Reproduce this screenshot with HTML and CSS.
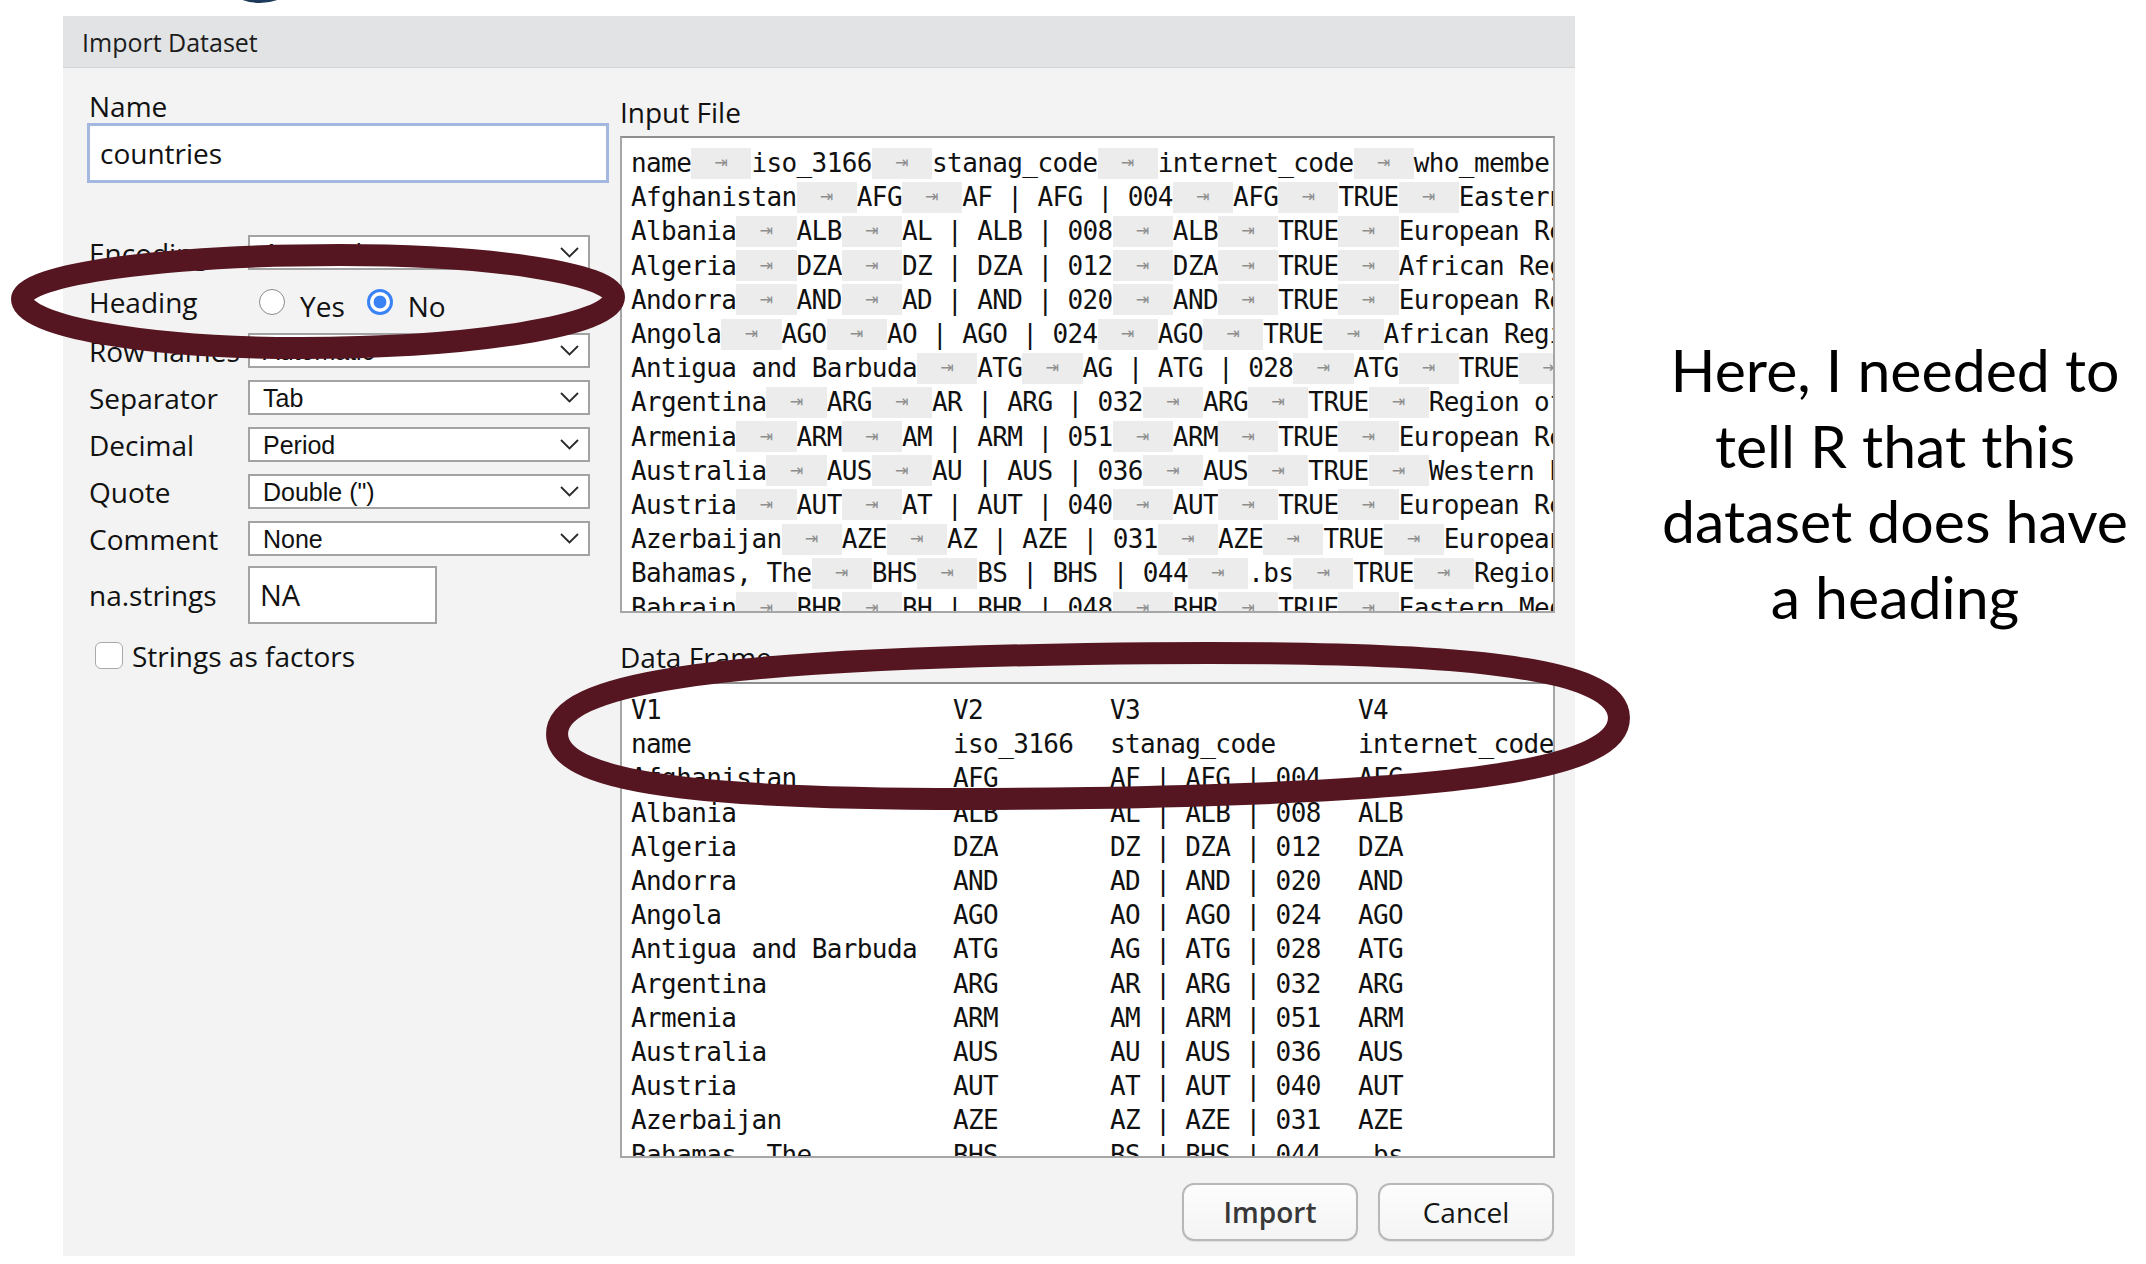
FILE: index.html
```html
<!DOCTYPE html>
<html>
<head>
<meta charset="utf-8">
<link rel="stylesheet" href="styles.css">
</head>
<body>
<div class="logo"></div>
<div class="page">
  <div class="dialog">
    <div class="titlebar">Import Dataset</div>
    <div class="dbody">
      <div class="left">
        <div class="name-label">Name</div>
        <div class="name-input">countries</div>
        <div class="form">
          <div class="row"><div class="label">Encoding</div><div class="select"><span>Automatic</span><svg class="chev" width="19" height="11" viewBox="0 0 19 11"><polyline points="1,1 9.5,9.5 18,1"/></svg></div></div>
          <div class="row heading-row"><div class="label">Heading</div>
            <div class="radios">
              <span class="radio"></span><span class="rtext">Yes</span>
              <span class="radio on"></span><span class="rtext">No</span>
            </div>
          </div>
          <div class="row"><div class="label">Row names</div><div class="select"><span>Automatic</span><svg class="chev" width="19" height="11" viewBox="0 0 19 11"><polyline points="1,1 9.5,9.5 18,1"/></svg></div></div>
          <div class="row gap"><div class="label">Separator</div><div class="select"><span>Tab</span><svg class="chev" width="19" height="11" viewBox="0 0 19 11"><polyline points="1,1 9.5,9.5 18,1"/></svg></div></div>
          <div class="row gap"><div class="label">Decimal</div><div class="select"><span>Period</span><svg class="chev" width="19" height="11" viewBox="0 0 19 11"><polyline points="1,1 9.5,9.5 18,1"/></svg></div></div>
          <div class="row gap"><div class="label">Quote</div><div class="select"><span>Double (")</span><svg class="chev" width="19" height="11" viewBox="0 0 19 11"><polyline points="1,1 9.5,9.5 18,1"/></svg></div></div>
          <div class="row gap"><div class="label">Comment</div><div class="select"><span>None</span><svg class="chev" width="19" height="11" viewBox="0 0 19 11"><polyline points="1,1 9.5,9.5 18,1"/></svg></div></div>
          <div class="row na-row"><div class="label">na.strings</div><div class="na-input">NA</div></div>
          <div class="check-row"><span class="checkbox"></span><span class="ctext">Strings as factors</span></div>
        </div>
      </div>
      <div class="right">
        <div class="section-label">Input File</div>
        <div class="filebox">
          <div class="mrow"><span>name</span><span class="tab">⇥</span><span>iso_3166</span><span class="tab">⇥</span><span>stanag_code</span><span class="tab">⇥</span><span>internet_code</span><span class="tab">⇥</span><span>who_member</span><span class="tab">⇥</span><span>who_region</span></div>
          <div class="mrow"><span>Afghanistan</span><span class="tab">⇥</span><span>AFG</span><span class="tab">⇥</span><span>AF | AFG | 004</span><span class="tab">⇥</span><span>AFG</span><span class="tab">⇥</span><span>TRUE</span><span class="tab">⇥</span><span>Eastern Mediterranean Region</span></div>
          <div class="mrow"><span>Albania</span><span class="tab">⇥</span><span>ALB</span><span class="tab">⇥</span><span>AL | ALB | 008</span><span class="tab">⇥</span><span>ALB</span><span class="tab">⇥</span><span>TRUE</span><span class="tab">⇥</span><span>European Region</span></div>
          <div class="mrow"><span>Algeria</span><span class="tab">⇥</span><span>DZA</span><span class="tab">⇥</span><span>DZ | DZA | 012</span><span class="tab">⇥</span><span>DZA</span><span class="tab">⇥</span><span>TRUE</span><span class="tab">⇥</span><span>African Region</span></div>
          <div class="mrow"><span>Andorra</span><span class="tab">⇥</span><span>AND</span><span class="tab">⇥</span><span>AD | AND | 020</span><span class="tab">⇥</span><span>AND</span><span class="tab">⇥</span><span>TRUE</span><span class="tab">⇥</span><span>European Region</span></div>
          <div class="mrow"><span>Angola</span><span class="tab">⇥</span><span>AGO</span><span class="tab">⇥</span><span>AO | AGO | 024</span><span class="tab">⇥</span><span>AGO</span><span class="tab">⇥</span><span>TRUE</span><span class="tab">⇥</span><span>African Region</span></div>
          <div class="mrow"><span>Antigua and Barbuda</span><span class="tab">⇥</span><span>ATG</span><span class="tab">⇥</span><span>AG | ATG | 028</span><span class="tab">⇥</span><span>ATG</span><span class="tab">⇥</span><span>TRUE</span><span class="tab">⇥</span><span>Region of the Americas</span></div>
          <div class="mrow"><span>Argentina</span><span class="tab">⇥</span><span>ARG</span><span class="tab">⇥</span><span>AR | ARG | 032</span><span class="tab">⇥</span><span>ARG</span><span class="tab">⇥</span><span>TRUE</span><span class="tab">⇥</span><span>Region of the Americas</span></div>
          <div class="mrow"><span>Armenia</span><span class="tab">⇥</span><span>ARM</span><span class="tab">⇥</span><span>AM | ARM | 051</span><span class="tab">⇥</span><span>ARM</span><span class="tab">⇥</span><span>TRUE</span><span class="tab">⇥</span><span>European Region</span></div>
          <div class="mrow"><span>Australia</span><span class="tab">⇥</span><span>AUS</span><span class="tab">⇥</span><span>AU | AUS | 036</span><span class="tab">⇥</span><span>AUS</span><span class="tab">⇥</span><span>TRUE</span><span class="tab">⇥</span><span>Western Pacific Region</span></div>
          <div class="mrow"><span>Austria</span><span class="tab">⇥</span><span>AUT</span><span class="tab">⇥</span><span>AT | AUT | 040</span><span class="tab">⇥</span><span>AUT</span><span class="tab">⇥</span><span>TRUE</span><span class="tab">⇥</span><span>European Region</span></div>
          <div class="mrow"><span>Azerbaijan</span><span class="tab">⇥</span><span>AZE</span><span class="tab">⇥</span><span>AZ | AZE | 031</span><span class="tab">⇥</span><span>AZE</span><span class="tab">⇥</span><span>TRUE</span><span class="tab">⇥</span><span>European Region</span></div>
          <div class="mrow"><span>Bahamas, The</span><span class="tab">⇥</span><span>BHS</span><span class="tab">⇥</span><span>BS | BHS | 044</span><span class="tab">⇥</span><span>.bs</span><span class="tab">⇥</span><span>TRUE</span><span class="tab">⇥</span><span>Region of the Americas</span></div>
          <div class="mrow"><span>Bahrain</span><span class="tab">⇥</span><span>BHR</span><span class="tab">⇥</span><span>BH | BHR | 048</span><span class="tab">⇥</span><span>BHR</span><span class="tab">⇥</span><span>TRUE</span><span class="tab">⇥</span><span>Eastern Mediterranean Region</span></div>
        </div>
        <div class="section-label df-label">Data Frame</div>
        <div class="dfbox">
          <div class="dfgrid">
            <span>V1</span><span>V2</span><span>V3</span><span>V4</span>
            <span>name</span><span>iso_3166</span><span>stanag_code</span><span>internet_code</span>
            <span>Afghanistan</span><span>AFG</span><span>AF | AFG | 004</span><span>AFG</span>
            <span>Albania</span><span>ALB</span><span>AL | ALB | 008</span><span>ALB</span>
            <span>Algeria</span><span>DZA</span><span>DZ | DZA | 012</span><span>DZA</span>
            <span>Andorra</span><span>AND</span><span>AD | AND | 020</span><span>AND</span>
            <span>Angola</span><span>AGO</span><span>AO | AGO | 024</span><span>AGO</span>
            <span>Antigua and Barbuda</span><span>ATG</span><span>AG | ATG | 028</span><span>ATG</span>
            <span>Argentina</span><span>ARG</span><span>AR | ARG | 032</span><span>ARG</span>
            <span>Armenia</span><span>ARM</span><span>AM | ARM | 051</span><span>ARM</span>
            <span>Australia</span><span>AUS</span><span>AU | AUS | 036</span><span>AUS</span>
            <span>Austria</span><span>AUT</span><span>AT | AUT | 040</span><span>AUT</span>
            <span>Azerbaijan</span><span>AZE</span><span>AZ | AZE | 031</span><span>AZE</span>
            <span>Bahamas, The</span><span>BHS</span><span>BS | BHS | 044</span><span>.bs</span>
          </div>
        </div>
        <div class="buttons">
          <div class="btn primary">Import</div>
          <div class="btn">Cancel</div>
        </div>
      </div>
    </div>
  </div>
  <div class="note">Here, I needed to<br>tell R that this<br>dataset does have<br>a heading</div>
</div>
<svg class="marks" width="2146" height="1264" viewBox="0 0 2146 1264">
  <path d="M22 299 C22 274.7 164.4 255 340 255 C491.3 255 614 273.8 614 297 C614 325.2 473.4 348 300 348 C146.5 348 22 326.1 22 299 Z"/>
  <path transform="rotate(-0.9 1088 726)" d="M557 726 C557 675 711.5 654 1088 654 C1464.5 654 1619 675 1619 726 C1619 777 1464.5 798 1088 798 C711.5 798 557 777 557 726 Z"/>
</svg>
</body>
</html>
```

FILE: styles.css
```css
* { box-sizing: border-box; }
html, body { margin: 0; padding: 0; }
body {
  width: 2146px;
  height: 1264px;
  background: #ffffff;
  position: relative;
  overflow: hidden;
  font-family: "Open Sans", "DejaVu Sans", sans-serif;
  color: #111;
}
.logo {
  position: absolute;
  left: 208px;
  top: -101px;
  width: 104px;
  height: 104px;
  border-radius: 50%;
  background: #1d3a5a;
}
.page { display: flex; align-items: flex-start; }
.dialog {
  margin: 16px 0 0 63px;
  width: 1512px;
  height: 1240px;
  background: #f3f3f3;
  display: flex;
  flex-direction: column;
  flex: none;
}
.titlebar {
  height: 52px;
  flex: none;
  background: #e2e3e5;
  border-bottom: 1px solid #d3d4d6;
  padding-left: 19px;
  display: flex;
  align-items: center;
  font-size: 25px;
  line-height: 30px;
  color: #1c1c1c;
}
.dbody { display: flex; flex: 1; }
.left { width: 557px; flex: none; padding: 22px 0 0 24px; }
.name-label { font-size: 28px; line-height: 33px; height: 33px; padding-left: 2px; }
.name-input {
  width: 522px;
  height: 60px;
  border: 3px solid #a4b8df;
  background: #fff;
  padding-left: 10px;
  display: flex;
  align-items: center;
  font-size: 28px;
  line-height: 34px;
}
.form { margin-top: 52px; display: flex; flex-direction: column; }
.row { display: flex; align-items: center; height: 35px; }
.row.gap { margin-top: 12px; }
.label { width: 161px; flex: none; padding-left: 2px; font-size: 28px; line-height: 34px; white-space: nowrap; }
.select {
  width: 342px;
  height: 35px;
  border: 2px solid #a3a3a3;
  background: #fff;
  display: flex;
  align-items: center;
  justify-content: space-between;
  padding: 0 9px 0 13px;
  font-family: "Liberation Sans", Arial, sans-serif;
  font-size: 25px;
  line-height: 30px;
  color: #111;
}
.chev { fill: none; stroke: #2a2a2a; stroke-width: 1.8; }
.heading-row { height: 63px; }
.radios { display: flex; align-items: center; padding-left: 11px; }
.radio {
  width: 26px;
  height: 26px;
  border-radius: 50%;
  border: 1.5px solid #8c8c8c;
  background: #fff;
  flex: none;
}
.radio.on {
  border: 3.5px solid #3a83f6;
  background: radial-gradient(circle, #3a83f6 0 6px, #fff 6.8px);
  margin-left: 22px;
}
.rtext { font-size: 28px; line-height: 34px; margin: 8px 0 0 15px; }
.na-row { margin-top: 10px; height: 58px; }
.na-input {
  width: 189px;
  height: 58px;
  border: 2px solid #a3a3a3;
  background: #fff;
  padding-left: 10px;
  display: flex;
  align-items: center;
  font-size: 29px;
  line-height: 34px;
}
.check-row { margin-top: 18px; display: flex; align-items: center; height: 27px; padding-left: 8px; }
.checkbox {
  width: 28px;
  height: 27px;
  border: 1.5px solid #a9a9a9;
  border-radius: 6px;
  background: #fff;
  flex: none;
}
.ctext { margin-left: 9px; font-size: 28px; line-height: 34px; }
.right {
  width: 955px;
  flex: none;
  padding: 27px 20px 15px 0;
  display: flex;
  flex-direction: column;
}
.section-label { font-size: 28px; line-height: 34px; height: 34px; }
.df-label { margin-top: 27px; }
.filebox, .dfbox {
  background: #fff;
  border: 2px solid #a6a6a6;
  border-top-color: #8e8e8e;
  overflow: hidden;
  font-family: "DejaVu Sans Mono", monospace;
  font-size: 26px;
  letter-spacing: -0.6px;
  color: #111;
}
.filebox { margin-top: 7px; height: 477px; padding: 8px 0 0 9px; }
.dfbox { margin-top: 8px; height: 476px; padding: 9px 0 0 9px; }
.mrow { display: flex; align-items: center; height: 34.2px; white-space: pre; }
.mrow > span { flex: none; line-height: 34px; }
.mrow > .tab {
  width: 60.2px;
  height: 31px;
  background: #ececec;
  display: flex;
  align-items: center;
  justify-content: center;
  color: #8e8e8e;
  font-family: "DejaVu Sans", sans-serif;
  font-size: 16px;
  letter-spacing: 0;
}
.dfgrid {
  display: grid;
  grid-template-columns: 322px 157px 248px max-content;
  grid-auto-rows: 34.2px;
  align-items: center;
  white-space: pre;
}
.dfgrid > span { line-height: 34px; }
.buttons { margin-top: 25px; display: flex; justify-content: flex-end; gap: 20px; padding-right: 1px; }
.btn {
  width: 176px;
  height: 58px;
  border: 2px solid #b8b8b8;
  border-radius: 12px;
  background: linear-gradient(#fdfdfd, #f4f4f4);
  box-shadow: 0 1px 1px rgba(0,0,0,0.08);
  display: flex;
  align-items: center;
  justify-content: center;
  font-size: 28px;
  line-height: 34px;
  color: #151515;
}
.btn.primary { font-weight: 600; color: #383838; }
.note {
  margin-left: 69px;
  width: 502px;
  flex: none;
  padding-top: 332px;
  text-align: center;
  font-family: Lato, "Open Sans", sans-serif;
  font-size: 59px;
  line-height: 75.5px;
  color: #000;
}
.marks {
  position: absolute;
  left: 0;
  top: 0;
  pointer-events: none;
}
.marks path { fill: none; stroke: #561621; stroke-width: 22; }
```
